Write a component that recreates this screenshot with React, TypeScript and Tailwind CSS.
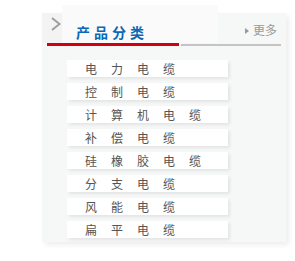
import React from 'react'

const categories = [
  '电力电缆',
  '控制电缆',
  '计算机电缆',
  '补偿电缆',
  '硅橡胶电缆',
  '分支电缆',
  '风能电缆',
  '扁平电缆',
]

const cjk = { fontFamily: '"Noto Sans CJK SC", "Noto Sans", sans-serif' }

export default function App() {
  return (
    <div className="w-[295px] h-[261px] bg-white pt-[5px] pl-[42px]" style={cjk}>
      <div className="w-[244px]">
        {/* tab top */}
        <div className="flex h-[8px]">
          <div className="w-[20px]" />
          <div className="w-[156px] bg-[#fafafa]" />
        </div>

        <div className="bg-[#f6f7f7] h-[229px] shadow-[3px_3px_5px_rgba(0,0,0,0.07)] flex flex-col">
          {/* header */}
          <div className="flex items-start h-[30px]">
            <div className="w-[20px] h-full bg-[#f3f3f3] pl-[9px] pt-[4px]">
              <svg width="10" height="14" viewBox="0 0 10 14">
                <path d="M1 1 L8.5 7 L1 13" fill="none" stroke="#9a9a9a" strokeWidth="1.8" />
              </svg>
            </div>
            <div className="w-[156px] h-full bg-[#fafafa] pl-[14px] pt-[6px]">
              <span className="text-[14px] leading-[14px] font-bold tracking-[4px] text-[#0b68b5]">产品分类</span>
            </div>
            <div className="flex-1 flex justify-end items-center pt-[11px] pr-[9px]">
              <svg width="4" height="6" viewBox="0 0 4 6" className="mr-[4px] mt-[1px]">
                <path d="M0 0 L4 3 L0 6 Z" fill="#999" />
              </svg>
              <span className="text-[12px] leading-[12px] text-[#999]">更多</span>
            </div>
          </div>

          {/* lines */}
          <div className="flex items-end h-[3px] pl-[5px] pr-[5px]">
            <div className="w-[132px] h-[3px] bg-[#d0000f]" />
            <div className="flex-1 h-[2px] ml-[2px] bg-[#c4c4c4]" />
          </div>

          {/* list */}
          <div className="flex flex-col gap-[6px] mt-[14px] pl-[25px]">
            {categories.map(c => (
              <div
                key={c}
                className="w-[161px] h-[17px] bg-white shadow-[2px_2px_3px_rgba(0,0,0,0.08)] pl-[18px] flex items-center"
              >
                <span className="text-[12px] leading-[12px] tracking-[14px] text-[#555]">{c}</span>
              </div>
            ))}
          </div>
        </div>
      </div>
    </div>
  )
}
